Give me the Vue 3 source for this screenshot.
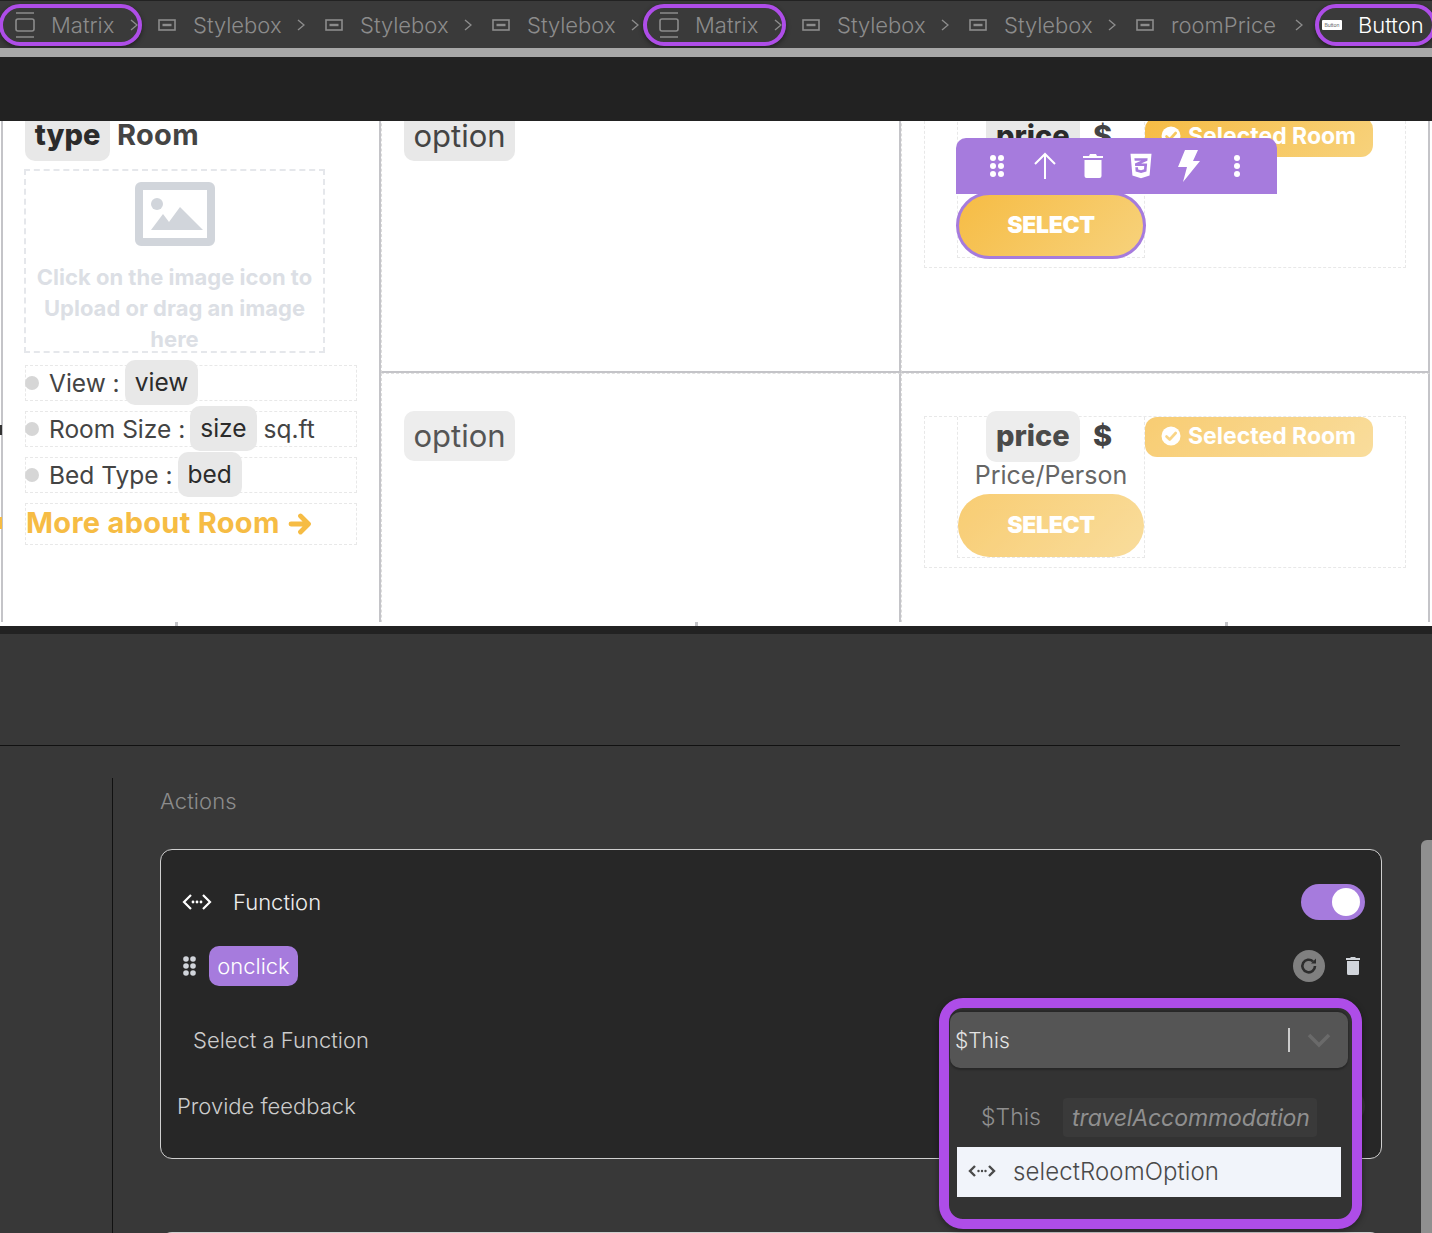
<template>
  <div class="page">
    <nav class="crumbs">
      <div
        v-for="(c, i) in crumbs"
        :key="i"
        class="crumb"
        :class="['crumb-' + c.type, { marked: c.marked, current: c.last }]"
      >
        <svg v-if="c.type === 'matrix'" class="ic-matrix" viewBox="0 0 20 28" fill="none" stroke="currentColor" stroke-width="1.6">
          <path d="M1 2h18M1 26h18" />
          <rect x="1" y="8" width="18" height="12" rx="2" />
        </svg>
        <svg v-else-if="c.type === 'box'" class="ic-box" viewBox="0 0 18 12" fill="none" stroke="currentColor" stroke-width="1.6">
          <rect x="1" y="1" width="16" height="10" />
          <path d="M4.5 6h9" stroke-width="2.4" />
        </svg>
        <span v-else class="ic-button">Button</span>
        <span class="crumb-text">{{ c.label }}</span>
        <svg v-if="!c.last" class="chev" viewBox="0 0 8 14" fill="none" stroke="currentColor" stroke-width="1.4">
          <path d="M1 2l6 5-6 5" />
        </svg>
      </div>
    </nav>
    <div class="grey-strip"></div>
    <div class="dark-strip"></div>

    <section class="canvas">
      <div class="viewport">
        <span class="stray stray-a"></span>
        <span class="stray stray-b"></span>
        <div class="matrix">
          <div class="cell cell-left">
            <div class="title">
              <span class="tag tag-title">type</span>
              <span class="title-room">Room</span>
            </div>
            <div class="upload">
              <svg class="upload-ic" viewBox="0 0 80 64">
                <path fill="#d1d5db" fill-rule="evenodd" d="M6 0h68a6 6 0 0 1 6 6v52a6 6 0 0 1-6 6H6a6 6 0 0 1-6-6V6a6 6 0 0 1 6-6zm2 8v48h64V8z" />
                <circle cx="22" cy="22" r="6" fill="#d1d5db" />
                <path fill="#d1d5db" d="M16 48l12-16 6 8 11-15 23 23z" />
              </svg>
              <p>Click on the image icon to Upload or drag an image here</p>
            </div>
            <div v-for="f in facts" :key="f.label" class="fact">
              <span class="dot"></span>
              <span class="fact-label">{{ f.label }} :</span>
              <span class="tag tag-fact">{{ f.value }}</span>
              <span v-if="f.unit" class="fact-unit">{{ f.unit }}</span>
            </div>
            <div class="more">
              <span>More about Room</span>
              <svg viewBox="0 0 24 22" fill="none" stroke="#f6bc44" stroke-width="4.8" stroke-linecap="round" stroke-linejoin="round">
                <path d="M3 11h17M12.500 3l8 8-8 8" />
              </svg>
            </div>
          </div>

          <template v-for="(row, r) in rows" :key="r">
            <div class="cell cell-mid" :class="{ 'last-row': r === 1 }">
              <span class="tag tag-option" :class="{ soft: row.faded }">option</span>
            </div>
            <div class="cell cell-right" :class="{ 'last-row': r === 1 }">
              <div class="offer" :class="{ faded: row.faded }">
                <div class="offer-price">
                  <div class="price-line">
                    <span class="tag tag-price">price</span>
                    <span class="dollar">$</span>
                  </div>
                  <div class="per">Price/Person</div>
                  <div class="select-wrap" :class="{ active: !row.faded }">
                    <div v-if="!row.faded" class="toolbar">
                      <span class="tool">
                        <svg width="16" height="24" viewBox="0 0 16 24" fill="#fff">
                          <circle cx="4" cy="4" r="3" /><circle cx="12" cy="4" r="3" />
                          <circle cx="4" cy="12" r="3" /><circle cx="12" cy="12" r="3" />
                          <circle cx="4" cy="20" r="3" /><circle cx="12" cy="20" r="3" />
                        </svg>
                      </span>
                      <span class="tool">
                        <svg width="24" height="28" viewBox="0 0 24 28" fill="none" stroke="#fff" stroke-width="2">
                          <path d="M12 27V2M2 12L12 2l10 10" />
                        </svg>
                      </span>
                      <span class="tool">
                        <svg width="20" height="24" viewBox="0 0 20 24" fill="#fff">
                          <path d="M7 0h6l1 2h6v2H0V2h6zM1.500 6h17v16a2 2 0 0 1-2 2h-13a2 2 0 0 1-2-2z" />
                        </svg>
                      </span>
                      <span class="tool">
                        <svg width="22" height="28" viewBox="0 0 384 512" fill="#fff">
                          <path d="M0 32l34.900 395.800L192 480l157.100-52.200L384 32H0zm313.100 80l-4.800 47.300L193 208.600l-.3.100h111.500l-12.800 146.600-98.200 28.700-98.800-29.200-6.400-73.900h48.900l3.200 38.300 52.600 13.300 54.700-15.400 3.700-61.600-166.300-.5v-.1l-.2.100-3.600-46.300L193.100 162l6.500-2.700H76.700L70.900 112h242.200z" />
                        </svg>
                      </span>
                      <span class="tool">
                        <svg width="22" height="32" viewBox="0 0 22 32" fill="#fff">
                          <path d="M7 0h13l-5 11h7L5 32l4-15H0z" />
                        </svg>
                      </span>
                      <span class="tool">
                        <svg width="8" height="24" viewBox="0 0 8 24" fill="#fff">
                          <circle cx="4" cy="4" r="3" /><circle cx="4" cy="12" r="3" /><circle cx="4" cy="20" r="3" />
                        </svg>
                      </span>
                    </div>
                    <div class="select-btn">SELECT</div>
                  </div>
                </div>
                <div class="badge">
                  <svg width="20" height="20" viewBox="0 0 20 20">
                    <circle cx="10" cy="10" r="9.500" fill="#fff" />
                    <path d="M5.500 10.500l3.200 3 6-6.500" fill="none" stroke="#f7c860" stroke-width="2.600" stroke-linecap="round" stroke-linejoin="round" />
                  </svg>
                  <span>Selected Room</span>
                </div>
              </div>
            </div>
          </template>
        </div>
      </div>
      <div class="ticks"><i></i><i></i><i></i></div>
    </section>
    <div class="dark-gap"></div>

    <section class="panel">
      <div class="panel-head"></div>
      <div class="panel-body">
        <div class="rail"></div>
        <div class="actions">
          <h3>Actions</h3>
          <div class="card">
            <div class="row row-fn">
              <svg width="30" height="18" viewBox="0 0 30 18" fill="none" stroke="#fff" stroke-width="2.200">
                <path d="M9 2L2 9l7 7M21 2l7 7-7 7" />
                <path d="M11 9h.01M15 9h.01M19 9h.01" stroke-width="2.800" stroke-linecap="round" />
              </svg>
              <span class="fn-label">Function</span>
              <span class="toggle"><i></i></span>
            </div>
            <div class="row row-event">
              <svg class="grip" width="13" height="20" viewBox="0 0 13 20" fill="#d1d5db">
                <circle cx="3" cy="3" r="2.800" /><circle cx="10" cy="3" r="2.800" />
                <circle cx="3" cy="10" r="2.800" /><circle cx="10" cy="10" r="2.800" />
                <circle cx="3" cy="17" r="2.800" /><circle cx="10" cy="17" r="2.800" />
              </svg>
              <span class="event">onclick</span>
              <span class="reload">
                <svg width="20" height="20" viewBox="0 0 20 20" fill="none" stroke="#2d2d2d" stroke-width="2.600">
                  <path d="M16 10a6.300 6.300 0 1 1-2-4.600" />
                  <path d="M17 2.500v5h-5z" fill="#2d2d2d" stroke="none" />
                </svg>
              </span>
              <svg class="bin" width="14" height="18" viewBox="0 0 14 18" fill="#d1d5db">
                <path d="M5 0h4l1 1h4v2H0V1h4zM1 4h12v12.500a1.500 1.500 0 0 1-1.500 1.500h-9A1.500 1.500 0 0 1 1 16.500z" />
              </svg>
            </div>
            <div class="row row-select">Select a Function</div>
            <div class="row row-feedback">
              <span>Provide feedback</span>
              <span class="toggle toggle-off"></span>
            </div>

            <div class="dropdown">
              <div class="dd-control">
                <span class="dd-value">$This</span>
                <span class="dd-sep"></span>
                <svg width="24" height="16" viewBox="0 0 24 16" fill="none" stroke="#6a6a6a" stroke-width="3.600">
                  <path d="M2 3l10 10L22 3" />
                </svg>
              </div>
              <div class="dd-group">
                <span class="dd-this">$This</span>
                <span class="dd-name">travelAccommodation</span>
              </div>
              <div class="dd-option">
                <svg width="28" height="14" viewBox="0 0 28 14" fill="none" stroke="#4a4a4a" stroke-width="2.400">
                  <path d="M7 2L2 7l5 5M21 2l5 5-5 5" />
                  <path d="M10.500 7h.01M14 7h.01M17.500 7h.01" stroke-width="2.400" stroke-linecap="round" />
                </svg>
                <span>selectRoomOption</span>
              </div>
            </div>
          </div>
          <div class="card-next"></div>
        </div>
      </div>
      <div class="scrollbar"></div>
    </section>
  </div>
</template>

<script setup>
const crumbs = [
  { label: 'Matrix', type: 'matrix', marked: true },
  { label: 'Stylebox', type: 'box' },
  { label: 'Stylebox', type: 'box' },
  { label: 'Stylebox', type: 'box' },
  { label: 'Matrix', type: 'matrix', marked: true },
  { label: 'Stylebox', type: 'box' },
  { label: 'Stylebox', type: 'box' },
  { label: 'roomPrice', type: 'box' },
  { label: 'Button', type: 'button', marked: true, last: true },
]

const facts = [
  { label: 'View', value: 'view' },
  { label: 'Room Size', value: 'size', unit: 'sq.ft' },
  { label: 'Bed Type', value: 'bed' },
]

const rows = [{ faded: false }, { faded: true }]
</script>

<style>
html,
body {
  margin: 0;
  background: #383838;
}
</style>

<style scoped>
.page {
  width: 1432px;
  height: 1233px;
  overflow: hidden;
  font-family: Inter, "Open Sans", sans-serif;
  background: #383838;
}

/* breadcrumb */
.crumbs {
  height: 48px;
  box-sizing: border-box;
  padding-left: 15px;
  border-top: 1px solid #222;
  background: #3a3a3a;
  display: flex;
  align-items: center;
  color: #8c8c8c;
  overflow: hidden;
  white-space: nowrap;
}
.crumb {
  position: relative;
  display: flex;
  align-items: center;
  flex: none;
  font-size: 22px;
  font-weight: 300;
}
.crumb.marked::after {
  content: "";
  position: absolute;
  left: -16px;
  right: 16px;
  top: 50%;
  height: 42px;
  margin-top: -21px;
  box-sizing: border-box;
  border: 4px solid #ae4de8;
  border-radius: 21px;
  box-shadow: 0 2px 5px rgba(0, 0, 0, 0.45);
}
.crumb.current {
  color: #fff;
  margin-left: -1px;
}
.crumb.current::after {
  left: -7px;
  right: 9px;
}
.ic-matrix {
  width: 20px;
  height: 28px;
}
.ic-box {
  width: 18px;
  height: 12px;
}
.ic-button {
  width: 20px;
  height: 10px;
  background: #fff;
  color: #222;
  font-size: 5px;
  line-height: 10px;
  text-align: center;
  border-radius: 1px;
}
.crumb-text {
  margin-left: 16px;
  width: 87px;
}
.crumb-box .crumb-text {
  margin-left: 17px;
}
.crumb-matrix .crumb-text {
  width: 62px;
}
.crumb:nth-child(8) .crumb-text {
  width: 107px;
}
.chev {
  width: 8px;
  height: 14px;
  margin: 0 20px 0 17px;
}

.grey-strip {
  height: 9px;
  background: #a8a8a8;
  border-bottom: 1px solid #222;
  box-sizing: content-box;
}
.dark-strip {
  height: 63px;
  background: #222;
}

/* canvas */
.canvas {
  background: #fff;
  color: #444;
}
.viewport {
  position: relative;
  height: 501px;
  overflow: hidden;
}
.matrix {
  margin-top: -48px;
  margin-left: 1px;
  width: 1429px;
  display: grid;
  grid-template-columns: 380px 520px 529px;
  grid-template-rows: 300px 300px;
}
.cell {
  box-sizing: border-box;
  border-right: 2px solid #c4c4c8;
  border-bottom: 2px solid #c4c4c8;
}
.cell.last-row {
  border-bottom: none;
  border-top: 1px dashed #e2e2e2;
}
.cell-left {
  grid-row: 1 / 3;
  border-left: 2px solid #c4c4c8;
  border-bottom: none;
  padding: 37px 0 0 22px;
}
.cell-mid {
  padding: 38px 0 0 22px;
  border-left: 1px dashed #dcdcdc;
}
.cell-right {
  padding: 43px 0 0 22px;
  border-left: 1px dashed #dcdcdc;
}
.cell-mid.last-row {
  padding-top: 37px;
}
.cell-right.last-row {
  padding-top: 42px;
}
.stray {
  position: absolute;
  left: 0;
  width: 2px;
  z-index: 1;
}
.stray-a {
  top: 304px;
  height: 10px;
  background: #333;
}
.stray-b {
  top: 396px;
  height: 12px;
  background: #f6bc44;
}
.tag {
  display: inline-flex;
  align-items: center;
  justify-content: center;
  box-sizing: border-box;
  padding-bottom: 2px;
  background: #e8e8e8;
  border-radius: 10px;
  color: #2b2b2b;
}
.title {
  display: flex;
  align-items: center;
  gap: 7px;
  font-size: 29px;
  font-weight: 700;
  color: #444;
}
.title-room {
  margin-top: -2px;
  letter-spacing: 0.3px;
}
.tag-title {
  width: 85px;
  height: 51px;
  font-size: 29px;
  font-weight: 800;
}
.upload {
  box-sizing: border-box;
  width: 301px;
  height: 184px;
  margin: 8px 0 0 -1px;
  border: 2px dashed #e5e7eb;
  padding-top: 11px;
  text-align: center;
  overflow: hidden;
}
.upload-ic {
  display: block;
  width: 80px;
  height: 64px;
  margin: 0 auto;
}
.upload p {
  margin: 16px 8px 0;
  font-size: 22px;
  line-height: 31px;
  font-weight: 700;
  color: #dcdfe5;
}
.fact {
  width: 332px;
  height: 36px;
  box-sizing: border-box;
  margin-top: 10px;
  border: 1px dashed #e8e8e8;
  display: flex;
  align-items: center;
  font-size: 24.5px;
  white-space: nowrap;
}
.upload + .fact {
  margin-top: 12px;
}
.dot {
  width: 14px;
  height: 14px;
  border-radius: 50%;
  background: #d6d6d6;
  margin: 0 10px 0 -1px;
  flex: none;
}
.fact-label,
.fact-unit {
  margin-top: -1px;
}
.tag-fact {
  height: 45px;
  margin: -2px 7px 0 5px;
  padding: 0 10px;
  flex: none;
}
.more {
  width: 332px;
  height: 42px;
  box-sizing: border-box;
  margin-top: 10px;
  padding-bottom: 3px;
  border: 1px dashed #e8e8e8;
  display: flex;
  align-items: center;
  gap: 10px;
  font-size: 29px;
  font-weight: 700;
  letter-spacing: 0.3px;
  color: #f6bc44;
  white-space: nowrap;
}
.more svg {
  width: 24px;
  height: 22px;
  flex: none;
  margin: 3px 0 0 -2px;
}
.tag-option {
  width: 111px;
  height: 50px;
  font-size: 31px;
  color: #444;
}
.tag-option.soft {
  background: #ededed;
  color: #555;
}
.offer {
  box-sizing: border-box;
  width: 482px;
  height: 152px;
  border: 1px dashed #e8e8e8;
  padding-left: 32px;
  display: flex;
  align-items: flex-start;
}
.offer-price {
  box-sizing: border-box;
  width: 188px;
  height: 141px;
  border-left: 1px dashed #e8e8e8;
  border-right: 1px dashed #e8e8e8;
  border-bottom: 1px dashed #e8e8e8;
}
.price-line {
  height: 45px;
  display: flex;
  justify-content: center;
  align-items: center;
  gap: 13px;
  margin-right: 4px;
  font-size: 29px;
  font-weight: 800;
  color: #444;
}
.tag-price {
  width: 94px;
  height: 51px;
  margin-top: -6px;
  font-size: 29px;
  font-weight: 800;
}
.dollar {
  margin-top: -8px;
}
.per {
  height: 32px;
  line-height: 26px;
  text-align: center;
  font-size: 25px;
  color: #555;
  white-space: nowrap;
}
.select-wrap {
  position: relative;
}
.select-btn {
  box-sizing: border-box;
  height: 63px;
  padding-bottom: 1px;
  border-radius: 32px;
  background: linear-gradient(135deg, #f6bc44, #f7d27c);
  color: #fff;
  display: flex;
  align-items: center;
  justify-content: center;
  font-size: 23px;
  font-weight: 900;
  letter-spacing: -0.3px;
}
.select-wrap.active .select-btn {
  outline: 3px solid #a67bdd;
  outline-offset: -1px;
}
.toolbar {
  position: absolute;
  left: -2px;
  bottom: 100%;
  width: 321px;
  height: 56px;
  z-index: 3;
  box-sizing: border-box;
  padding-left: 17px;
  background: #a67bdd;
  border-radius: 10px 10px 0 0;
  display: flex;
  align-items: center;
}
.tool {
  width: 48px;
  display: flex;
  justify-content: center;
}
.badge {
  box-sizing: border-box;
  width: 228px;
  height: 40px;
  padding: 0 0 2px 16px;
  border-radius: 12px;
  background: linear-gradient(135deg, #f6bc44, #f7d27c);
  display: flex;
  align-items: center;
  gap: 7px;
  color: #fff;
  font-size: 23px;
  font-weight: 700;
  white-space: nowrap;
}
.faded .select-btn,
.faded .badge {
  opacity: 0.75;
}
.faded .tag-price {
  background: #ededed;
  color: #4a4a4a;
}
.faded .per {
  color: #666;
}
.ticks {
  height: 4px;
  display: grid;
  grid-template-columns: 352px 688px 372px;
  justify-items: center;
}
.ticks i {
  width: 3px;
  height: 4px;
  background: #c4c4c8;
}
.dark-gap {
  height: 8px;
  background: #222;
}

/* properties panel */
.panel {
  position: relative;
  height: 599px;
  color: #ddd;
}
.panel-head {
  width: 1400px;
  height: 111px;
  border-bottom: 1px solid #111;
}
.panel-body {
  display: flex;
  padding-top: 32px;
}
.rail {
  width: 112px;
  height: 460px;
  border-right: 1px solid #111;
  flex: none;
}
.actions {
  margin-left: 47px;
  width: 1222px;
}
.actions h3 {
  margin: 10px 0 0;
  height: 61px;
  line-height: 27px;
  font-size: 22px;
  font-weight: 300;
  letter-spacing: 0.1px;
  color: #8c8c8c;
}
.card {
  position: relative;
  box-sizing: border-box;
  width: 1222px;
  height: 310px;
  padding: 34px 16px 0;
  background: #272727;
  border: 1px solid #cfcfcf;
  border-radius: 12px;
}
.card-next {
  height: 40px;
  margin-top: 73px;
  background: #272727;
  border-top: 1px solid #cfcfcf;
  border-radius: 12px 12px 0 0;
}
.row {
  display: flex;
  align-items: center;
  font-size: 22px;
  font-weight: 300;
}
.row-fn {
  height: 36px;
  padding-left: 5px;
  color: #eee;
}
.fn-label {
  margin-left: 21px;
  flex: 1;
}
.toggle {
  width: 64px;
  height: 36px;
  box-sizing: border-box;
  padding: 4px 5px;
  border-radius: 18px;
  background: #a67bdd;
  display: flex;
  justify-content: flex-end;
}
.toggle i {
  width: 28px;
  height: 28px;
  border-radius: 50%;
  background: #fff;
}
.toggle-off {
  background: #333;
}
.row-event {
  height: 40px;
  margin-top: 26px;
  padding-left: 6px;
}
.event {
  margin-left: 13px;
  width: 89px;
  height: 40px;
  border-radius: 10px;
  background: #a67bdd;
  color: #fff;
  display: flex;
  align-items: center;
  justify-content: center;
  flex: none;
}
.reload {
  margin-left: auto;
  width: 32px;
  height: 32px;
  border-radius: 50%;
  background: #808080;
  display: flex;
  align-items: center;
  justify-content: center;
}
.bin {
  margin: 0 5px 0 21px;
}
.row-select {
  height: 40px;
  margin-top: 34px;
  padding-left: 16px;
  color: #ccc;
}
.row-feedback {
  height: 40px;
  margin-top: 26px;
  color: #ccc;
  justify-content: space-between;
}
.dropdown {
  position: absolute;
  left: 778px;
  top: 148px;
  box-sizing: border-box;
  width: 423px;
  height: 231px;
  padding: 4px 4px 0 1px;
  border: 10px solid #ae4de8;
  border-radius: 24px;
  background: #333;
  box-shadow: 0 2px 6px rgba(0, 0, 0, 0.4);
  z-index: 2;
}
.dd-control {
  height: 56px;
  box-sizing: border-box;
  padding: 0 17px 0 5px;
  border-radius: 10px;
  background: #555;
  box-shadow: 0 -2px 2px rgba(0, 0, 0, 0.25), 0 2px 2px rgba(0, 0, 0, 0.25);
  display: flex;
  align-items: center;
  color: #e4e4e4;
  font-size: 21px;
  font-weight: 300;
}
.dd-value {
  flex: 1;
}
.dd-sep {
  width: 2px;
  height: 24px;
  background: #ccc;
  margin-right: 17px;
}
.dd-group {
  height: 39px;
  margin: 30px 0 0 31px;
  display: flex;
  align-items: center;
  gap: 22px;
  color: #8f8f8f;
  font-size: 23px;
  font-weight: 300;
}
.dd-this {
  width: 60px;
  margin-top: -1px;
}
.dd-name {
  width: 254px;
  height: 39px;
  box-sizing: border-box;
  padding-left: 9px;
  line-height: 40px;
  background: #3a3a3a;
  border-radius: 4px;
  font-style: italic;
  font-weight: 400;
  letter-spacing: -0.1px;
  white-space: nowrap;
}
.dd-option {
  height: 50px;
  margin: 10px 7px 0 7px;
  padding: 0 0 2px 11px;
  box-sizing: border-box;
  background: #f1f4fa;
  display: flex;
  align-items: center;
  gap: 17px;
  color: #4a4a4a;
  font-size: 24px;
  font-weight: 300;
  letter-spacing: 0.1px;
}
.scrollbar {
  position: absolute;
  left: 1421px;
  top: 206px;
  width: 11px;
  height: 400px;
  background: #8f8f8f;
  border-radius: 6px 0 0 0;
}
</style>
